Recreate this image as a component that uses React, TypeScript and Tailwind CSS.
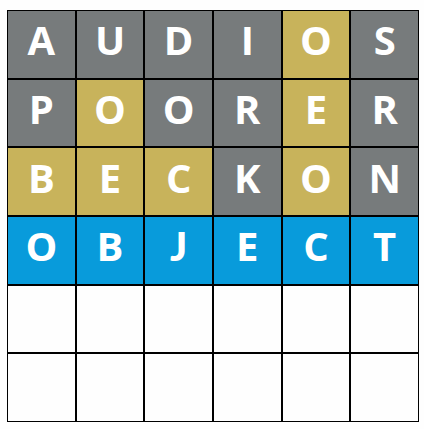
import React from 'react';

type TileState = 'absent' | 'present' | 'correct' | 'empty';

interface Guess {
  word: string;
  states: TileState[];
}

const WORD_LENGTH = 6;
const MAX_GUESSES = 6;

const guesses: Guess[] = [
  { word: 'AUDIOS', states: ['absent', 'absent', 'absent', 'absent', 'present', 'absent'] },
  { word: 'POORER', states: ['absent', 'present', 'absent', 'absent', 'present', 'absent'] },
  { word: 'BECKON', states: ['present', 'present', 'present', 'absent', 'present', 'absent'] },
  { word: 'OBJECT', states: ['correct', 'correct', 'correct', 'correct', 'correct', 'correct'] },
];

const tileColors: Record<TileState, string> = {
  absent: 'bg-[#777b7c]',
  present: 'bg-[#c8b35b]',
  correct: 'bg-[#089bdb]',
  empty: 'bg-[#fefefe]',
};

interface TileProps {
  letter: string;
  state: TileState;
}

const Tile: React.FC<TileProps> = ({ letter, state }) => (
  <div
    className={`flex aspect-square items-center justify-center border border-black pb-2 text-[40px] leading-none font-bold text-white ${tileColors[state]}`}
  >
    {/* Open Sans drops its J below the baseline, Lato keeps it level with the other capitals */}
    <span>{letter === 'J' ? <span className="font-['Lato',sans-serif] font-black">J</span> : letter}</span>
  </div>
);

export default function App() {
  const rows = Array.from({ length: MAX_GUESSES }, (_, i) => guesses[i]);

  return (
    <main className="min-h-screen bg-[#fefefe] pt-[10px] pr-[5px] pl-[7px] font-['Open_Sans','Noto_Sans',sans-serif]">
      <div className="grid grid-cols-6">
        {rows.map((guess, row) =>
          Array.from({ length: WORD_LENGTH }, (_, col) => (
            <Tile
              key={`${row}-${col}`}
              letter={guess ? guess.word[col] : ''}
              state={guess ? guess.states[col] : 'empty'}
            />
          ))
        )}
      </div>
    </main>
  );
}
